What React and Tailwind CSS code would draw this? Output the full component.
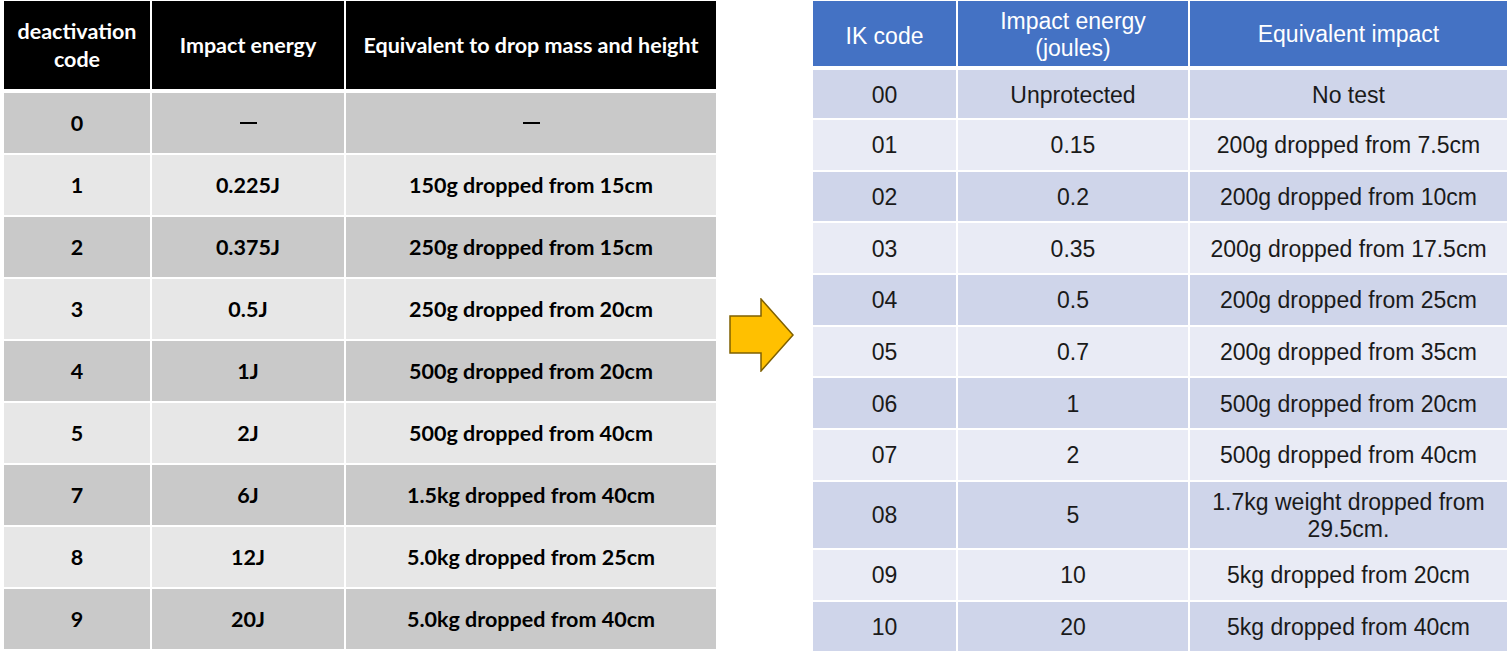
import React from 'react';

const leftRows = [
  ['0', '—', '—'],
  ['1', '0.225J', '150g dropped from 15cm'],
  ['2', '0.375J', '250g dropped from 15cm'],
  ['3', '0.5J', '250g dropped from 20cm'],
  ['4', '1J', '500g dropped from 20cm'],
  ['5', '2J', '500g dropped from 40cm'],
  ['7', '6J', '1.5kg dropped from 40cm'],
  ['8', '12J', '5.0kg dropped from 25cm'],
  ['9', '20J', '5.0kg dropped from 40cm'],
];

const rightRows = [
  ['00', 'Unprotected', 'No test'],
  ['01', '0.15', '200g dropped from 7.5cm'],
  ['02', '0.2', '200g dropped from 10cm'],
  ['03', '0.35', '200g dropped from 17.5cm'],
  ['04', '0.5', '200g dropped from 25cm'],
  ['05', '0.7', '200g dropped from 35cm'],
  ['06', '1', '500g dropped from 20cm'],
  ['07', '2', '500g dropped from 40cm'],
  ['08', '5', '1.7kg weight dropped from 29.5cm.'],
  ['09', '10', '5kg dropped from 20cm'],
  ['10', '20', '5kg dropped from 40cm'],
];

const LeftTable = () => (
  <div className="w-[712px] font-['Lato',sans-serif] font-bold text-[21.5px]">
    <div className="grid grid-cols-[146px_192px_370px] gap-x-[2px] mb-[4px]">
      <div className="h-[88px] bg-black text-white flex items-center justify-center text-center leading-[28px]">
        deactivation<br />code
      </div>
      <div className="h-[88px] bg-black text-white flex items-center justify-center">Impact energy</div>
      <div className="h-[88px] bg-black text-white flex items-center justify-center">Equivalent to drop mass and height</div>
    </div>
    <div className="grid grid-cols-[146px_192px_370px] gap-[2px]">
      {leftRows.map((r, i) => {
        const bg = i % 2 === 0 ? 'bg-[#c9c9c9]' : 'bg-[#e7e7e7]';
        return r.map((c, j) => (
          <div key={`${i}-${j}`} className={`h-[60px] ${bg} text-black flex items-center justify-center`}>
            {c === '—' ? <span className="inline-block w-[17px] h-[2px] bg-black" /> : c}
          </div>
        ));
      })}
    </div>
  </div>
);

const RightTable = () => (
  <div className="w-[694px] font-['Liberation_Sans',Arial,sans-serif] text-[23px]">
    <div className="grid grid-cols-[143px_230px_317px] gap-x-[2px] mb-[4px]">
      <div className="h-[65px] bg-[#4472c4] text-white flex items-center justify-center pt-[5px]">IK code</div>
      <div className="h-[65px] bg-[#4472c4] text-white flex items-center justify-center text-center leading-[27px] pt-[2px]">
        Impact energy<br />(joules)
      </div>
      <div className="h-[65px] bg-[#4472c4] text-white flex items-center justify-center pt-[2px]">Equivalent impact</div>
    </div>
    <div className="grid grid-cols-[143px_230px_317px] gap-[2px]">
      {rightRows.map((r, i) => {
        const bg = i % 2 === 0 ? 'bg-[#cfd5ea]' : 'bg-[#e9ebf5]';
        const h = i === 0 ? 'h-[48px]' : i === 8 ? 'h-[66px]' : 'h-[49.7px]';
        return r.map((c, j) => (
          <div
            key={`${i}-${j}`}
            className={`${h} ${bg} text-[#1a1a1a] flex items-center justify-center text-center leading-[27px] px-[14px] pt-[2px]`}
          >
            {c}
          </div>
        ));
      })}
    </div>
  </div>
);

const Arrow = () => (
  <svg width="66" height="74" viewBox="0 0 66 74" className="block">
    <polygon
      points="1,18 32,18 32,1 64,37 32,73 32,55 1,55"
      fill="#ffc000"
      stroke="#7f6000"
      strokeWidth="1.5"
      strokeLinejoin="miter"
    />
  </svg>
);

export default function App() {
  return (
    <div className="w-[1507px] h-[656px] bg-white flex items-start pl-[4px] pt-[1px] overflow-hidden">
      <LeftTable />
      <div className="ml-[13px] mt-[297px]">
        <Arrow />
      </div>
      <div className="ml-[18px]">
        <RightTable />
      </div>
    </div>
  );
}
